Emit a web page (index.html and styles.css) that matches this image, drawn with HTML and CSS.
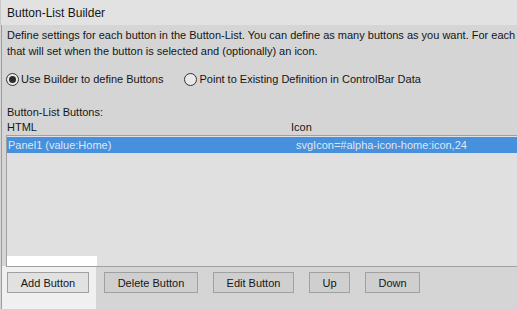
FILE: index.html
```
<!DOCTYPE html>
<html>
<head>
    <meta charset="utf-8">
    <title>Button-List Builder</title>
    <link rel="stylesheet" href="styles.css">
</head>
<body>
    <div class="titlebar"><h2>Button-List Builder</h2></div>
    <div class="panel">
        <p class="desc">
            <span>Define settings for each button in the Button-List. You can define as many buttons as you want. For each button, define the HTML, the value</span>
            <span>that will set when the button is selected and (optionally) an icon.</span>
        </p>
        <div class="choice">
            <label class="radio"><i class="dot on"></i>Use Builder to define Buttons</label>
            <label class="radio"><i class="dot"></i>Point to Existing Definition in ControlBar Data</label>
        </div>
        <h3 class="caption">Button-List Buttons:</h3>
        <div class="cols">
            <span class="col-html">HTML</span>
            <span class="col-icon">Icon</span>
        </div>
        <div class="list">
            <div class="row sel">
                <span class="col-html">Panel1 (value:Home)</span>
                <span class="col-icon">svgIcon=#alpha-icon-home:icon,24</span>
            </div>
        </div>
        <div class="actions">
            <button class="btn first btn-add">Add Button</button>
            <button class="btn btn-del">Delete Button</button>
            <button class="btn btn-edit">Edit Button</button>
            <button class="btn btn-up">Up</button>
            <button class="btn btn-down">Down</button>
        </div>
    </div>
</body>
</html>
```
FILE: styles.css
```
html, body { margin: 0; padding: 0; }
body { width: 517px; height: 309px; overflow: hidden; background: #d5d5d5; color: #161616; font-family: "Liberation Sans", Arial, sans-serif; font-size: 11px; }
.titlebar { height: 25px; background: #e2e2e2; padding-left: 6px; display: flex; align-items: center; border-left: 1px solid #c8c8c8; }
.titlebar h2 { margin: 0; font-size: 12px; font-weight: normal; }
.panel { position: relative; height: 284px; overflow: hidden; border-left: 1px solid #9c9c9c; margin-left: 1px; padding-left: 4px; }
.desc { margin: 0; padding-top: 2px; padding-left: 1px; white-space: nowrap; line-height: 16px; }
.desc span { display: block; }
.choice { display: flex; margin-top: 12px; height: 16px; align-items: center; }
.radio { display: flex; align-items: center; gap: 2px; margin-right: 21px; }
.dot { width: 11px; height: 11px; border: 1px solid #333; border-radius: 50%; background: #e9e9e9; display: flex; align-items: center; justify-content: center; }
.dot.on::after { content: ""; width: 7px; height: 7px; border-radius: 50%; background: #2b2b2b; }
.caption { margin: 18px 0 0 1px; font-size: 11px; font-weight: normal; line-height: 15px; }
.cols { display: flex; height: 15px; line-height: 15px; padding-left: 1px; }
.col-html { width: 284px; }
.list { position: relative; z-index: 1; height: 129px; background: #e0e0e0; border-top: 1px solid #a0a0a0; border-left: 1px solid #a0a0a0; border-bottom: 1px solid #a0a0a0; padding-top: 1px; }
.list::after { content: ""; position: absolute; left: 0; bottom: 0; width: 90px; height: 10px; background: #fff; }
.row { display: flex; height: 16px; line-height: 16px; padding-left: 1px; }
.row .col-html { width: 288px; }
.row.sel { background: #4690dd; color: #dfe8f3; }
.panel::after { content: ""; position: absolute; left: 0; top: 241px; width: 94px; height: 43px; background: #f0f0f0; }
.actions { position: relative; z-index: 1; display: flex; gap: 15px; margin-top: 5px; padding-left: 1px; }
.btn { height: 21px; padding: 0; border: 1px solid #a0a0a0; background: #cfcfcf; color: #161616; font: inherit; }
.btn.first { background: #e1e1e1; }
.btn-add { width: 82px; }
.btn-del { width: 94px; }
.btn-edit { width: 81px; }
.btn-up { width: 41px; }
.btn-down { width: 55px; }
```
